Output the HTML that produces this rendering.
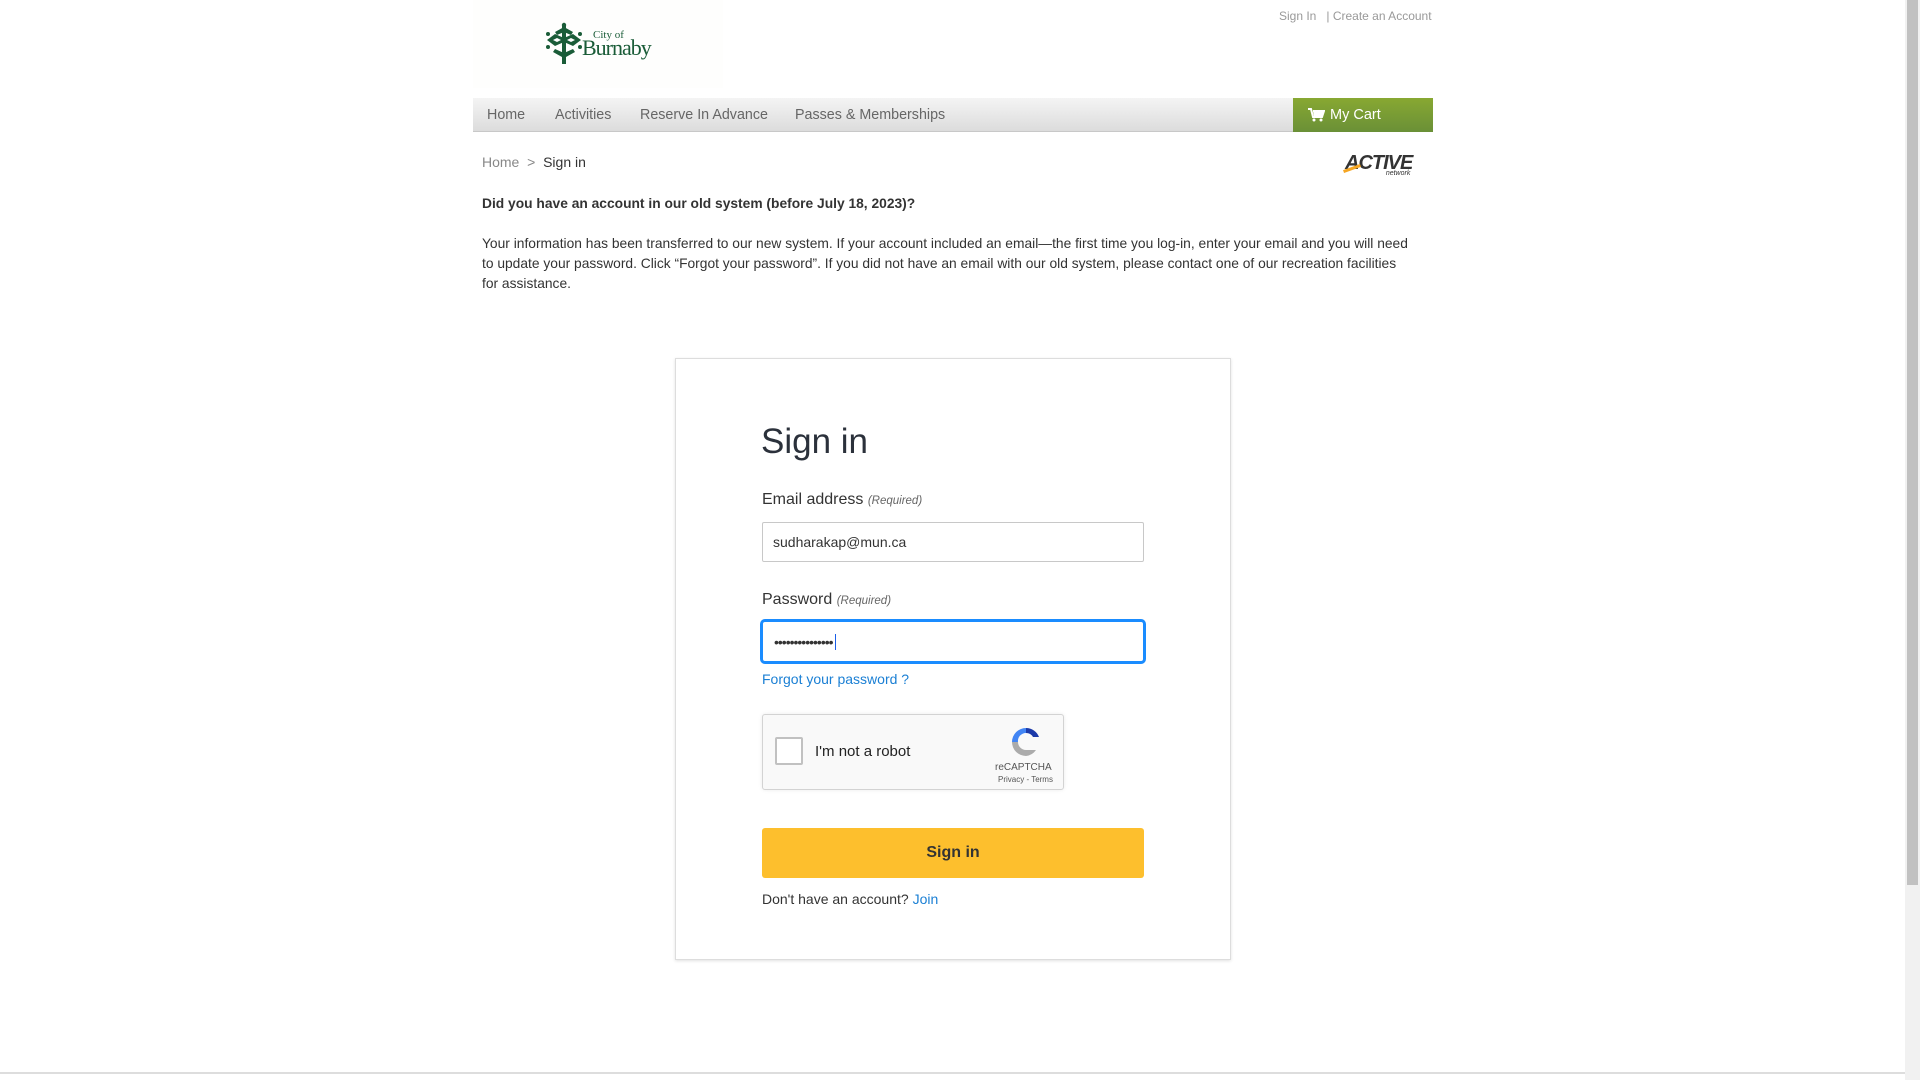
<!DOCTYPE html>
<html><head><meta charset="utf-8"><style>
*{box-sizing:border-box;margin:0;padding:0}
html,body{width:1920px;height:1080px;overflow:hidden;background:#fff;font-family:"Liberation Sans",Arial,sans-serif;color:#333}
.abs{position:absolute}
.sb{position:absolute;left:1905px;top:0;width:15px;height:1080px;background:#f1f1f1}
.sb .th{position:absolute;left:2px;top:0;width:11px;height:885px;background:#c1c1c1}
.nav{left:473px;top:98px;width:960px;height:34px;background:linear-gradient(#f4f4f4,#dcdcdc);border-bottom:1px solid #c8c8c8}
.nav span{position:absolute;top:9px;font-size:14.3px;color:#666}
.cart{left:1293px;top:98px;width:140px;height:34px;background:linear-gradient(#88a832,#6a9037);color:#fff;font-size:14.5px}
p.t{font-size:13.8px;color:#333;line-height:19.8px}
.card{left:675px;top:358px;width:556px;height:602px;border:1px solid #ddd;box-shadow:0 1px 3px rgba(0,0,0,.12);background:#fff}
.lbl{font-size:16px;color:#333}
.lbl i{font-size:11.5px;color:#666}
.inp{width:382px;height:40px;border:1px solid #c8c8c8;border-radius:2px;font-size:14px;padding:11px 10px;color:#333}
</style></head><body>
<div class="abs" style="left:473px;top:0;width:250px;height:88px;background:#fefefd"></div>
<svg class="abs" style="left:545px;top:22px" width="40" height="46" viewBox="0 0 40 46">
<g fill="#1a5c38"><circle cx="19" cy="3" r="2.2"/><path d="M17 3h4v39h-4z"/>
<path d="M19 5l9 5-2 3-7-3-7 3-2-3z"/><path d="M19 16l-9-4-8 6 8 6 9-4 9 4 8-6-8-6z"/>
<path d="M10 27l9 4 9-4 2 3-9 5h-4l-9-5z"/><circle cx="3" cy="12" r="2"/><circle cx="35" cy="12" r="2"/><circle cx="3" cy="25" r="2"/><circle cx="35" cy="25" r="2"/></g>
<path d="M8 18l4-2 4 2-4 2zM22 18l4-2 4 2-4 2z" fill="#fff"/></svg>
<div class="abs" style="left:593px;top:29px;font-family:'Liberation Serif',serif;color:#1a5c38;font-size:11px">City of</div>
<div class="abs" style="left:582px;top:35px;font-family:'Liberation Serif',serif;color:#1a5c38;font-size:22px;letter-spacing:-1px">Burnaby</div>
<div class="abs" style="left:1279px;top:9px;font-size:12px;color:#999">Sign In &nbsp;&nbsp;| Create an Account</div>
<div class="abs nav"><span style="left:14px">Home</span><span style="left:82px">Activities</span><span style="left:167px">Reserve In Advance</span><span style="left:322px">Passes &amp; Memberships</span></div>
<div class="abs cart"><svg class="abs" style="left:15px;top:10px" width="17" height="14" viewBox="0 0 17 14"><path d="M0 1h3l2 8h9l2-6H5" fill="none" stroke="#fff" stroke-width="2"/><path d="M5 3h11l-2 6H6z" fill="#fff"/><circle cx="6" cy="12" r="1.5" fill="#fff"/><circle cx="13" cy="12" r="1.5" fill="#fff"/></svg><span class="abs" style="left:37px;top:9px">My Cart</span></div>
<div class="abs" style="left:482px;top:154px;font-size:14px;color:#888">Home &nbsp;&gt;&nbsp; <span style="color:#333">Sign in</span></div>
<div class="abs" style="left:1345px;top:152px;font-style:italic;font-weight:bold;font-size:20px;color:#333;letter-spacing:-1px">ACTIVE<div style="position:absolute;right:2px;top:18px;font-size:7px;font-weight:normal;letter-spacing:0">network</div></div>
<div class="abs" style="left:1343px;top:167px;width:18px;height:3px;background:#f5a623;transform:rotate(-20deg)"></div>
<p class="abs t" style="left:482px;top:194px;font-weight:bold">Did you have an account in our old system (before July 18, 2023)?</p>
<p class="abs t" style="left:482px;top:234px;width:932px">Your information has been transferred to our new system. If your account included an email—the first time you log-in, enter your email and you will need to update your password. Click “Forgot your password”. If you did not have an email with our old system, please contact one of our recreation facilities for assistance.</p>
<div class="abs card"></div>
<div class="abs" style="left:761px;top:422px;font-size:35px;color:#2b313b">Sign in</div>
<div class="abs lbl" style="left:762px;top:491px">Email address <i>(Required)</i></div>
<div class="abs inp" style="left:762px;top:522px">sudharakap@mun.ca</div>
<div class="abs lbl" style="left:762px;top:591px">Password <i>(Required)</i></div>
<div class="abs inp" style="left:760px;top:619px;width:386px;height:45px;border:3px solid #1a8cff;border-radius:5px;padding:12px 11px;letter-spacing:-1px">•••••••••••••••<span style="border-left:1px solid #1a5ee8;margin-left:2px"></span></div>
<div class="abs" style="left:762px;top:671px;font-size:14px;color:#1a7fd4">Forgot your password ?</div>
<div class="abs" style="left:762px;top:714px;width:302px;height:76px;background:#f9f9f9;border:1px solid #d3d3d3;border-radius:3px;box-shadow:0 0 4px rgba(0,0,0,.08)">
<div class="abs" style="left:12px;top:22px;width:28px;height:28px;border:2px solid #c1c1c1;border-radius:2px;background:#fff"></div>
<div class="abs" style="left:52px;top:28px;font-size:15px;color:#222">I'm not a robot</div>
<svg class="abs" style="left:247px;top:11px" width="32" height="32" viewBox="0 0 32 32"><path d="M16 2a14 14 0 0 1 13 9l-6 0a8 8 0 0 0-7-4z" fill="#1c3aa9"/><path d="M2 16A14 14 0 0 1 16 2v5a8 8 0 0 0-8 9z" fill="#4285f4"/><path d="M16 30A14 14 0 0 1 2 16h6a8 8 0 0 0 8 8h10a14 14 0 0 1-10 6z" fill="#ababab"/></svg>
<div class="abs" style="left:232px;top:47px;font-size:10px;color:#555">reCAPTCHA</div>
<div class="abs" style="left:235px;top:60px;font-size:8px;color:#555">Privacy - Terms</div></div>
<div class="abs" style="left:762px;top:828px;width:382px;height:50px;background:#fdbf2d;border-radius:3px;text-align:center;line-height:50px;font-size:16px;font-weight:bold;color:#333">Sign in</div>
<div class="abs" style="left:762px;top:891px;font-size:14px;color:#333">Don't have an account? <span style="color:#1a7fd4">Join</span></div>
<div class="abs" style="left:0;top:1072px;width:1905px;height:2px;background:#ddd"></div>
<div class="sb"><div class="th"></div></div>
</body></html>
